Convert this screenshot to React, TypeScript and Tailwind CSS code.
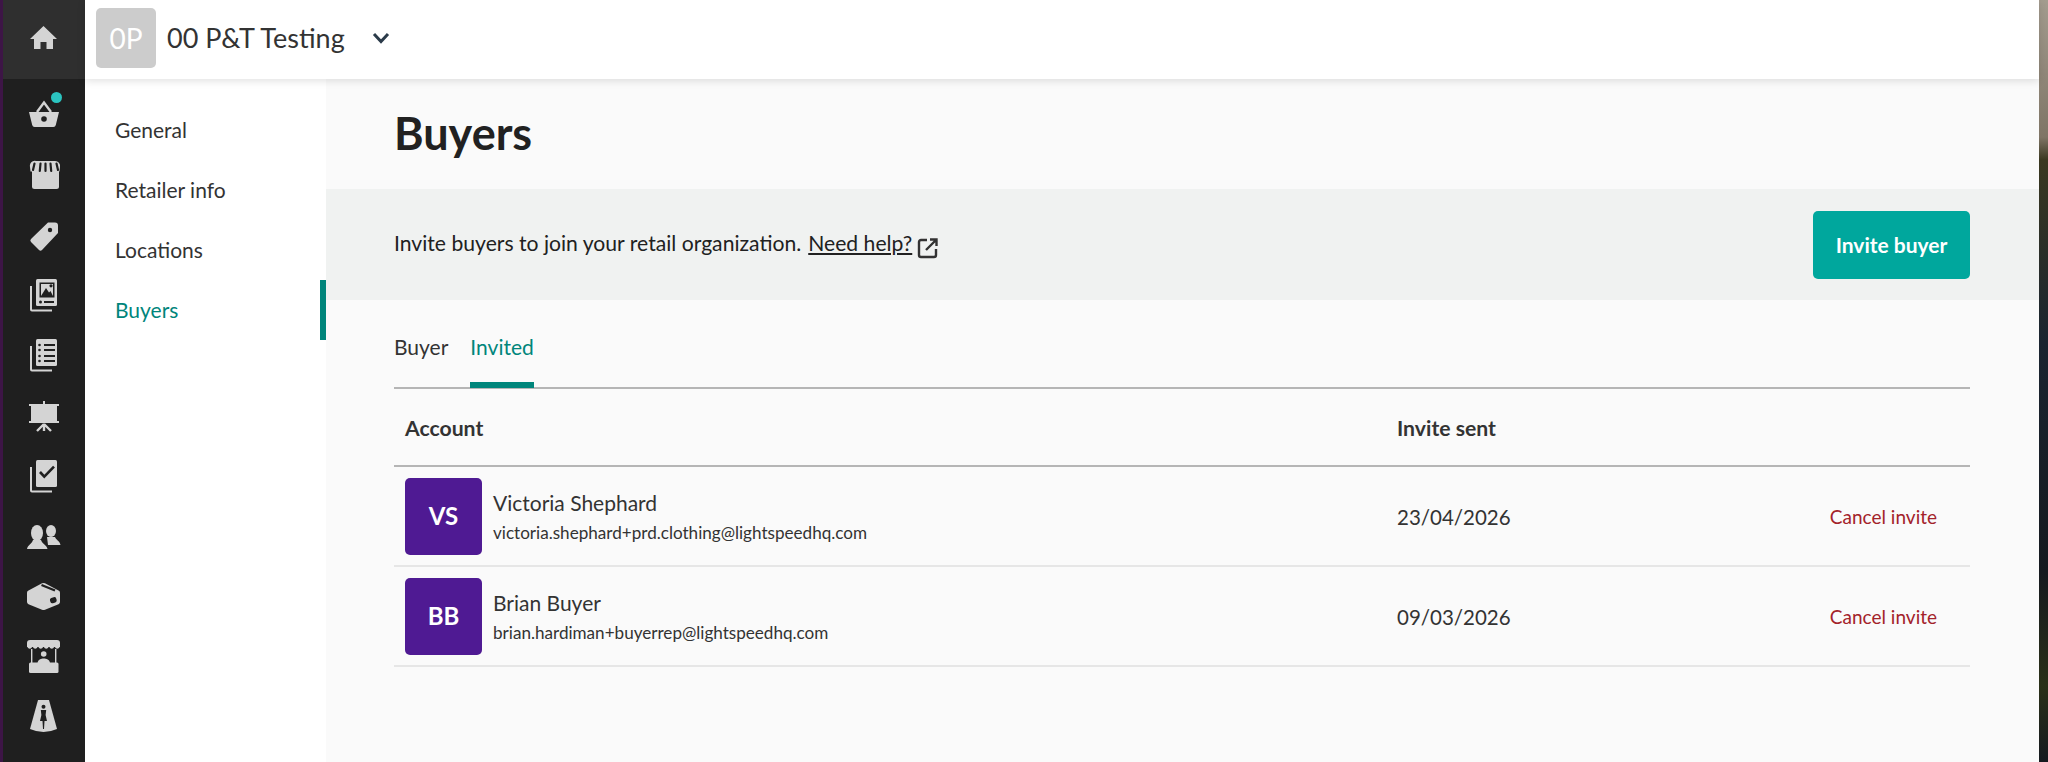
import React from "react";

const F = "#d4d4d4";
const D = "#1f1f1f";

function Ic({ children }: { children: React.ReactNode }) {
  return (
    <svg width="34" height="36" viewBox="0 0 34 36" className="block overflow-visible">
      {children}
    </svg>
  );
}

const icons: React.ReactNode[] = [
  <Ic key="basket">
    <path d="M2 14H32L28.8 27a2.5 2.5 0 0 1-2.4 2H7.6a2.5 2.5 0 0 1-2.4-2Z" fill={F} />
    <path d="M10 14L17 4.5L24 14" fill="none" stroke={F} strokeWidth="2.4" />
    <circle cx="17" cy="21" r="2.8" fill={D} />
  </Ic>,
  <Ic key="store">
    <rect x="5" y="10" width="27" height="21" rx="2.5" fill={F} />
    <path d="M9 3H28a5 5 0 0 1 5 6L32.5 13.5H3.5L3 9a5 5 0 0 1 6-6Z" fill={F} />
    <path d="M7.5 5.5L6 12M13.5 5.5L12.8 13M18.5 5.5V13M23.5 5.5L24.2 13M29.5 5.5L31 12" stroke={D} strokeWidth="2.2" strokeLinecap="round" />
  </Ic>,
  <Ic key="tag">
    <path d="M21 4.5H28a3 3 0 0 1 3 3V15L15 32a2.2 2.2 0 0 1-3 0L4 24a2.2 2.2 0 0 1 0-3Z" fill={F} />
    <circle cx="23" cy="12" r="2.2" fill={D} />
  </Ic>,
  <Ic key="catalog">
    <rect x="9" y="1" width="21" height="27" rx="1.5" fill={F} />
    <path d="M4 8V31.5a1 1 0 0 0 1 1H25" fill="none" stroke={F} strokeWidth="2" />
    <rect x="12.5" y="4.5" width="15" height="15" fill={D} />
    <rect x="14" y="6" width="12" height="12" fill={F} />
    <path d="M14 18L19 10L22 14.5L23.5 13L26 18Z" fill={D} />
    <circle cx="24" cy="7.8" r="1.6" fill={D} />
    <circle cx="13.5" cy="24" r="1.5" fill={D} />
    <path d="M17 24H27" stroke={D} strokeWidth="2" />
  </Ic>,
  <Ic key="list">
    <rect x="9" y="1" width="21" height="27" rx="1.5" fill={F} />
    <path d="M4 8V31.5a1 1 0 0 0 1 1H25" fill="none" stroke={F} strokeWidth="2" />
    <path d="M17 7H28M17 12H28M17 18H28M17 23H28" stroke={D} strokeWidth="2" />
    <circle cx="12.5" cy="7" r="1.3" fill={D} />
    <circle cx="12.5" cy="12" r="1.3" fill={D} />
    <circle cx="12.5" cy="18" r="1.3" fill={D} />
    <circle cx="12.5" cy="23" r="1.3" fill={D} />
  </Ic>,
  <Ic key="present">
    <rect x="16" y="3" width="2" height="4" fill={F} />
    <rect x="2" y="6" width="30" height="2" fill={F} />
    <rect x="4" y="7" width="26" height="17" fill={F} />
    <rect x="2" y="23" width="30" height="2" fill={F} />
    <path d="M17 26L10 33M17 26V33M17 26L24 33" stroke={F} strokeWidth="2.4" />
  </Ic>,
  <Ic key="check">
    <rect x="9" y="2" width="21" height="27" rx="1.5" fill={F} />
    <path d="M4 9V32.5a1 1 0 0 0 1 1H25" fill="none" stroke={F} strokeWidth="2" />
    <path d="M13 14L17.3 18.7L27 8.7" fill="none" stroke={D} strokeWidth="2.6" />
  </Ic>,
  <Ic key="people">
    <ellipse cx="24" cy="13" rx="5" ry="6" fill={F} />
    <path d="M20 19H28C29 22 33 23 33.5 27H21Z" fill={F} />
    <ellipse cx="10" cy="15" rx="6" ry="8" fill={F} />
    <path d="M6 22H14C15 26 20 27 20.5 31H0C0.5 27 5 26 6 22Z" fill={F} />
  </Ic>,
  <Ic key="box">
    <path d="M15 5.3a4 4 0 0 1 3 0L31.5 12.5a2.5 2.5 0 0 1 1.5 2.2V24a2.5 2.5 0 0 1-1.5 2.2L18 31.7a4 4 0 0 1-3 0L1.5 26.2A2.5 2.5 0 0 1 0 24V14.7a2.5 2.5 0 0 1 1.5-2.2Z" fill={F} />
    <path d="M14.5 7L28 12.5" stroke={D} strokeWidth="2.4" />
    <rect x="23" y="19.5" width="6.5" height="5.5" rx="2" fill={D} transform="rotate(-18 26 22)" />
  </Ic>,
  <Ic key="market">
    <path d="M3 2H30a3 3 0 0 1 3 3L33 9H0V5a3 3 0 0 1 3-3Z" fill={F} />
    <path d="M0 8.5Q2.75 13 5.5 8.5Q8.25 13 11 8.5Q13.75 13 16.5 8.5Q19.25 13 22 8.5Q24.75 13 27.5 8.5Q30.25 13 33 8.5Z" fill={F} />
    <path d="M4.7 11V26M28.7 11V26" stroke={F} strokeWidth="1.4" />
    <circle cx="16.7" cy="16" r="2.8" fill={F} />
    <path d="M10.5 25C11 21.5 14 20.5 16.7 20.5S22.5 21.5 23 25Z" fill={F} />
    <rect x="2" y="24.5" width="29.5" height="10.5" rx="1.5" fill={F} />
  </Ic>,
  <Ic key="mannequin">
    <path d="M11 2H22L30 31Q16.5 37 3 31Z" fill={F} />
    <circle cx="16.5" cy="8.8" r="2" fill={D} />
    <path d="M13.8 12H19.2L18.6 17L20 23H17.5L17 31H16L15.5 23H13L14.4 17Z" fill={D} />
  </Ic>,
];

const navItems = ["General", "Retailer info", "Locations", "Buyers"];

function Row({ initials, name, email, date }: { initials: string; name: string; email: string; date: string }) {
  return (
    <div className="grid h-[100px] grid-cols-[1003px_1fr_auto] items-center border-b-2 border-[#e6e6e6]">
      <div className="flex items-center pl-[11px]">
        <div className="flex h-[77px] w-[77px] items-center justify-center rounded-[5px] bg-[#4f1a93] text-[24px] font-bold text-white">
          {initials}
        </div>
        <div className="ml-[11px] pt-[3px]">
          <div className="text-[21px] leading-[31px] text-[#333333]">{name}</div>
          <div className="text-[17.1px] leading-[30px] text-[#333333]">{email}</div>
        </div>
      </div>
      <div className="pt-[2px] text-[20.5px] text-[#333333]">{date}</div>
      <div className="pr-[33px] pt-[2px] text-[19px] text-[#a3222a]">Cancel invite</div>
    </div>
  );
}

export default function App() {
  return (
    <div className="flex h-[762px] w-full overflow-hidden bg-white font-['Lato',sans-serif]">
      <aside className="flex w-[85px] shrink-0 flex-col border-l-[3px] border-[#3d1546] bg-[#1f1f1f]">
        <div className="flex h-[79px] shrink-0 items-center justify-center bg-[#2f2f2f] pb-[5px]">
          <svg width="34" height="34" viewBox="0 0 34 34" className="mr-[1px] block">
            <path d="M16.5 6L30 19H26V29H19.5V22H13.5V29H7V19H3Z" fill={F} />
          </svg>
        </div>
        <div className="flex flex-col pt-[7px]">
          {icons.map((ic, i) => (
            <div key={i} className="relative flex h-[60px] items-center justify-center pr-[1px]">
              {ic}
              {i === 0 && <span className="absolute left-[48px] top-[6px] h-[11px] w-[11px] rounded-full bg-[#2bc4c0]" />}
            </div>
          ))}
        </div>
      </aside>

      <div className="flex min-w-0 flex-1 flex-col">
        <header className="relative z-10 flex h-[79px] shrink-0 items-center bg-white pb-[3px] pl-[11px] shadow-[0_2px_8px_rgba(0,0,0,0.12)]">
          <div className="flex h-[60px] w-[60px] items-center justify-center rounded-[5px] bg-[#cccccc] text-[28px] text-white">0P</div>
          <div className="ml-[11px] text-[27px] text-[#333333]">00 P&amp;T Testing</div>
          <svg width="18" height="12" viewBox="0 0 18 12" className="ml-[27px]">
            <path d="M2 2L9 9.5L16 2" fill="none" stroke="#2b3b4a" strokeWidth="3" />
          </svg>
        </header>

        <div className="flex min-h-0 flex-1">
          <nav className="w-[241px] shrink-0 bg-white pt-[21px]">
            {navItems.map((n) => {
              const active = n === "Buyers";
              return (
                <div
                  key={n}
                  className={
                    active
                      ? "flex h-[60px] items-center border-r-[6px] border-[#00857b] pl-[30px] text-[21px] text-[#00857b]"
                      : "flex h-[60px] items-center pl-[30px] text-[21px] text-[#333333]"
                  }
                >
                  {n}
                </div>
              );
            })}
          </nav>

          <main className="min-w-0 flex-1 bg-[#fafafa]">
            <div className="flex h-[110px] items-center px-[68px]">
              <h1 className="text-[45px] font-bold text-[#212121]">Buyers</h1>
            </div>
            <div className="flex h-[111px] items-center justify-between bg-[#f0f2f1] pl-[68px] pr-[69px]">
              <div className="flex items-center pb-[1px] text-[21.15px] text-[#212121]">
                <span>Invite buyers to join your retail organization.</span>
                <span className="ml-[7px] underline">Need help?</span>
                <svg width="22" height="22" viewBox="0 0 22 22" className="ml-[5px] mt-[8px]">
                  <path d="M10 3H4a2 2 0 0 0-2 2v13a2 2 0 0 0 2 2h13a2 2 0 0 0 2-2v-6" fill="none" stroke="#333333" strokeWidth="2.4" />
                  <path d="M9 13L19 3M13 2.5H19.5V9" fill="none" stroke="#333333" strokeWidth="2.4" />
                </svg>
              </div>
              <button className="h-[68px] w-[157px] rounded-[5px] bg-[#00a79d] text-[21px] font-bold text-white">Invite buyer</button>
            </div>

            <div className="pl-[68px] pr-[69px]">
              <div className="flex h-[89px] gap-[22px] border-b-2 border-[#b5b5b5]">
                <div className="flex items-center pt-[6px] text-[21px] text-[#333333]">Buyer</div>
                <div className="-mb-[1px] flex items-center border-b-[6px] border-[#00857b] pt-[12px] text-[21px] text-[#00857b]">Invited</div>
              </div>
              <div className="grid h-[78px] grid-cols-[1003px_1fr] items-center border-b-2 border-[#b5b5b5] pt-[3px] text-[21.2px] font-bold text-[#333333]">
                <div className="pl-[11px]">Account</div>
                <div>Invite sent</div>
              </div>
              <Row initials="VS" name="Victoria Shephard" email="victoria.shephard+prd.clothing@lightspeedhq.com" date="23/04/2026" />
              <Row initials="BB" name="Brian Buyer" email="brian.hardiman+buyerrep@lightspeedhq.com" date="09/03/2026" />
            </div>
          </main>
        </div>
      </div>

      <div className="w-[9px] shrink-0 bg-[linear-gradient(180deg,#a49c8f_0%,#7f7566_18%,#3a3820_21%,#1a2430_45%,#15191f_75%,#2a3018_90%,#15191f_100%)]" />
    </div>
  );
}
